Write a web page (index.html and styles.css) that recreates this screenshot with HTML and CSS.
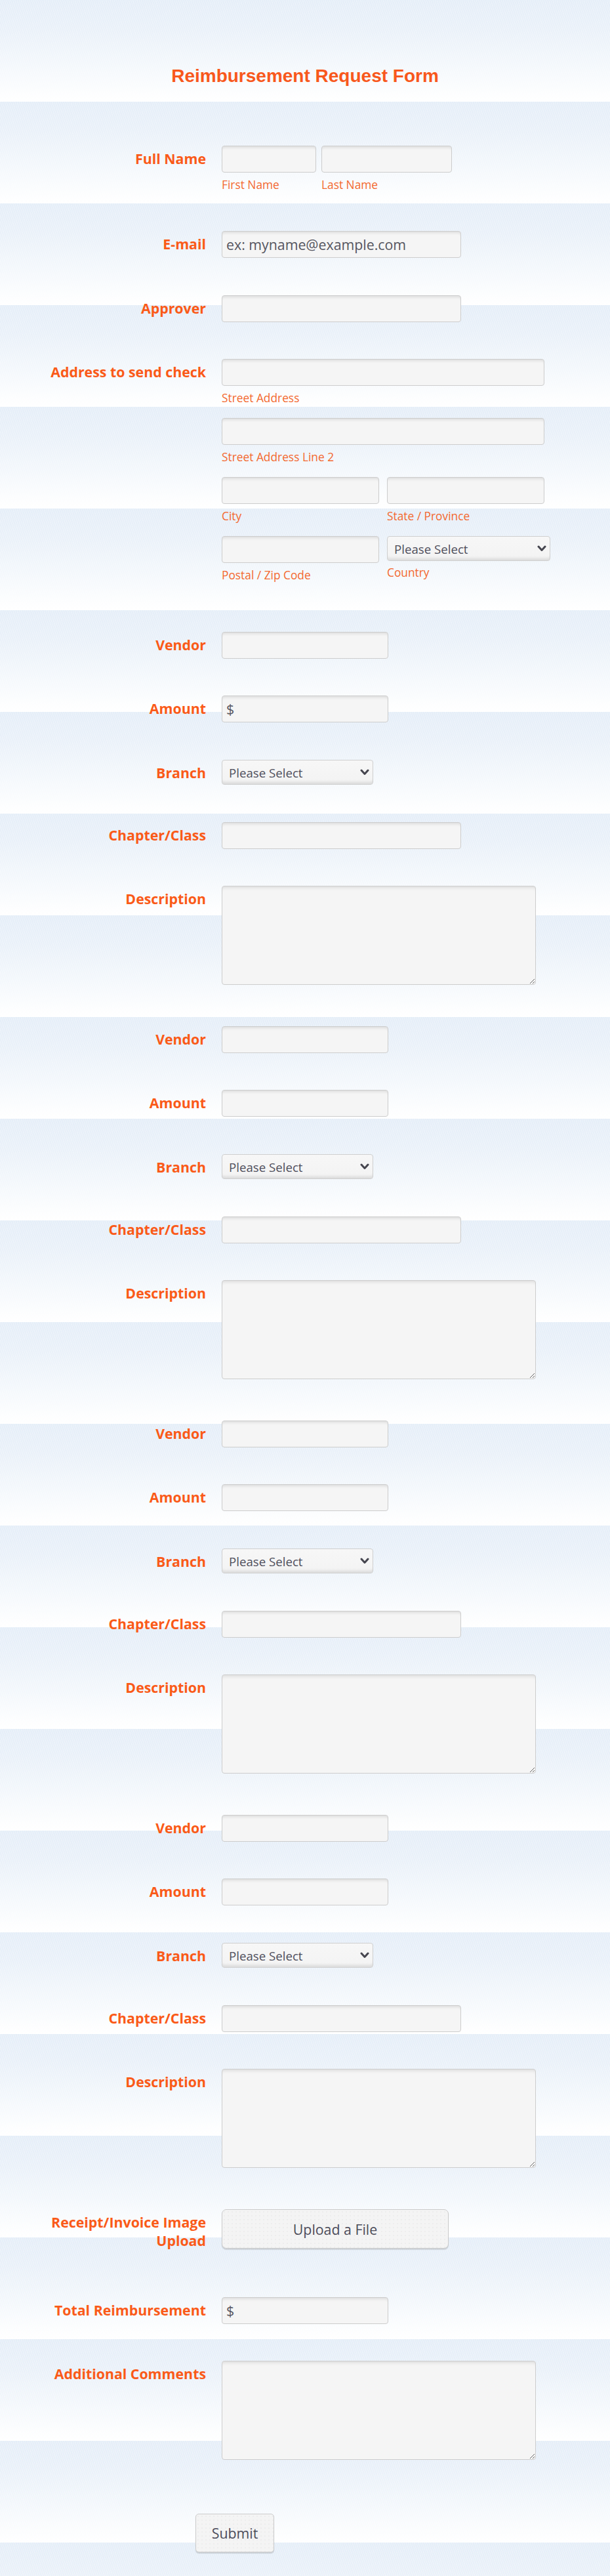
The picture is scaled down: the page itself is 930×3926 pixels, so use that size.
FILE: index.html
```html
<!DOCTYPE html>
<html lang="en">
<head>
<meta charset="utf-8">
<title>Reimbursement Request Form</title>
<link rel="stylesheet" href="styles.css">
</head>
<body>
<div class="page">
  <h1 class="title">Reimbursement Request Form</h1>

  <div class="row gap-57">
    <label class="label">Full Name</label>
    <div class="field name-field">
      <div class="part">
        <input class="input w-first" type="text">
        <span class="sublabel">First Name</span>
      </div>
      <div class="part">
        <input class="input w-last" type="text">
        <span class="sublabel">Last Name</span>
      </div>
    </div>
  </div>

  <div class="row gap-57">
    <label class="label">E-mail</label>
    <div class="field"><input class="input w-mid" type="email" placeholder="ex: myname@example.com"></div>
  </div>

  <div class="row gap-56">
    <label class="label">Approver</label>
    <div class="field"><input class="input w-mid" type="text"></div>
  </div>

  <div class="row gap-56">
    <label class="label">Address to send check</label>
    <div class="field addr">
      <div class="addr-line span2">
        <input class="input w-full" type="text">
        <span class="sublabel">Street Address</span>
      </div>
      <div class="addr-line span2">
        <input class="input w-full" type="text">
        <span class="sublabel">Street Address Line 2</span>
      </div>
      <div class="addr-line">
        <input class="input w-half" type="text">
        <span class="sublabel">City</span>
      </div>
      <div class="addr-line">
        <input class="input w-half" type="text">
        <span class="sublabel">State / Province</span>
      </div>
      <div class="addr-line">
        <input class="input w-half" type="text">
        <span class="sublabel">Postal / Zip Code</span>
      </div>
      <div class="addr-line">
        <div class="select-wrap w-country">
          <select class="select"><option>Please Select</option></select>
          <svg class="chev" width="14" height="10" viewBox="0 0 14 10"><path d="M2 2 L7 7.5 L12 2" fill="none" stroke="#46464f" stroke-width="3" stroke-linecap="round" stroke-linejoin="round"/></svg>
        </div>
        <span class="sublabel sub-select">Country</span>
      </div>
    </div>
  </div>

  <div class="row gap-56"><label class="label">Vendor</label><div class="field"><input class="input w-short" type="text"></div></div>
  <div class="row gap-57"><label class="label">Amount</label><div class="field"><input class="input w-short" type="text" placeholder="$"></div></div>
  <div class="row gap-57"><label class="label">Branch</label><div class="field"><div class="select-wrap w-branch"><select class="select"><option>Please Select</option></select><svg class="chev" width="14" height="10" viewBox="0 0 14 10"><path d="M2 2 L7 7.5 L12 2" fill="none" stroke="#46464f" stroke-width="3" stroke-linecap="round" stroke-linejoin="round"/></svg></div></div></div>
  <div class="row gap-56"><label class="label">Chapter/Class</label><div class="field"><input class="input w-mid" type="text"></div></div>
  <div class="row gap-63"><label class="label">Description</label><div class="field"><textarea class="textarea"></textarea></div></div>

  <div class="row gap-56"><label class="label">Vendor</label><div class="field"><input class="input w-short" type="text"></div></div>
  <div class="row gap-57"><label class="label">Amount</label><div class="field"><input class="input w-short" type="text"></div></div>
  <div class="row gap-57"><label class="label">Branch</label><div class="field"><div class="select-wrap w-branch"><select class="select"><option>Please Select</option></select><svg class="chev" width="14" height="10" viewBox="0 0 14 10"><path d="M2 2 L7 7.5 L12 2" fill="none" stroke="#46464f" stroke-width="3" stroke-linecap="round" stroke-linejoin="round"/></svg></div></div></div>
  <div class="row gap-56"><label class="label">Chapter/Class</label><div class="field"><input class="input w-mid" type="text"></div></div>
  <div class="row gap-63"><label class="label">Description</label><div class="field"><textarea class="textarea"></textarea></div></div>

  <div class="row gap-56"><label class="label">Vendor</label><div class="field"><input class="input w-short" type="text"></div></div>
  <div class="row gap-57"><label class="label">Amount</label><div class="field"><input class="input w-short" type="text"></div></div>
  <div class="row gap-57"><label class="label">Branch</label><div class="field"><div class="select-wrap w-branch"><select class="select"><option>Please Select</option></select><svg class="chev" width="14" height="10" viewBox="0 0 14 10"><path d="M2 2 L7 7.5 L12 2" fill="none" stroke="#46464f" stroke-width="3" stroke-linecap="round" stroke-linejoin="round"/></svg></div></div></div>
  <div class="row gap-56"><label class="label">Chapter/Class</label><div class="field"><input class="input w-mid" type="text"></div></div>
  <div class="row gap-63"><label class="label">Description</label><div class="field"><textarea class="textarea"></textarea></div></div>

  <div class="row gap-56"><label class="label">Vendor</label><div class="field"><input class="input w-short" type="text"></div></div>
  <div class="row gap-57"><label class="label">Amount</label><div class="field"><input class="input w-short" type="text"></div></div>
  <div class="row gap-57"><label class="label">Branch</label><div class="field"><div class="select-wrap w-branch"><select class="select"><option>Please Select</option></select><svg class="chev" width="14" height="10" viewBox="0 0 14 10"><path d="M2 2 L7 7.5 L12 2" fill="none" stroke="#46464f" stroke-width="3" stroke-linecap="round" stroke-linejoin="round"/></svg></div></div></div>
  <div class="row gap-56"><label class="label">Chapter/Class</label><div class="field"><input class="input w-mid" type="text"></div></div>
  <div class="row gap-63"><label class="label">Description</label><div class="field"><textarea class="textarea"></textarea></div></div>

  <div class="row gap-72">
    <label class="label">Receipt/Invoice Image Upload</label>
    <div class="field"><button class="btn upload" type="button">Upload a File</button></div>
  </div>

  <div class="row gap-56"><label class="label">Total Reimbursement</label><div class="field"><input class="input w-short" type="text" placeholder="$"></div></div>
  <div class="row gap-82"><label class="label">Additional Comments</label><div class="field"><textarea class="textarea"></textarea></div></div>

  <div class="submit-row">
    <button class="btn submit" type="submit">Submit</button>
  </div>
</div>
</body>
</html>
```

FILE: styles.css
```css
* { box-sizing: border-box; }

html, body {
  margin: 0;
  padding: 0;
}

body {
  font-family: "Open Sans", "DejaVu Sans", sans-serif;
  background-color: #ffffff;
  background-image:
    repeating-linear-gradient(72deg, rgba(255,255,255,0.28) 0px, rgba(255,255,255,0.28) 1px, rgba(255,255,255,0) 1px, rgba(255,255,255,0) 3px),
    linear-gradient(to bottom, #e5eef8 0%, #eaf1f9 30%, #f4f8fc 65%, #ffffff 100%);
  background-size: 930px 155px, 930px 155px;
  background-repeat: repeat, repeat;
}

.page {
  width: 930px;
  min-height: 3926px;
  padding-top: 99px;
  padding-bottom: 38px;
}

.title {
  margin: 0 0 89px 0;
  font-family: "Liberation Sans", Arial, sans-serif;
  font-weight: bold;
  font-size: 28px;
  line-height: 34px;
  color: #f8581c;
  text-align: center;
}

.row {
  display: flex;
  align-items: flex-start;
  margin-left: 64px;
}

.gap-56 { margin-bottom: 56px; }
.gap-57 { margin-bottom: 57px; }
.gap-63 { margin-bottom: 63px; }
.gap-72 { margin-bottom: 72px; }
.gap-82 { margin-bottom: 82px; }

.label {
  width: 250px;
  margin-right: 24px;
  padding-top: 6px;
  text-align: right;
  font-family: "Open Sans", sans-serif;
  font-weight: 700;
  font-size: 21.33px;
  line-height: 28px;
  color: #fa5a18;
  flex-shrink: 0;
}

.field {
  display: flex;
  flex-direction: column;
  align-items: flex-start;
}

.name-field {
  flex-direction: row;
  gap: 8px;
}

.part {
  display: flex;
  flex-direction: column;
}

.sublabel {
  display: block;
  margin-top: 6px;
  padding-bottom: 2px;
  font-size: 17.33px;
  line-height: 24px;
  color: #f3692f;
  white-space: nowrap;
}

.input {
  display: block;
  height: 41px;
  padding: 0 6px;
  border: 1px solid #cdcdcd;
  border-radius: 4px;
  background: #f5f5f5;
  box-shadow: inset 0 5px 4px -3px rgba(0,0,0,0.10);
  font-family: "Open Sans", sans-serif;
  font-size: 21.33px;
  color: #4f4f5c;
  outline: none;
}

.input::placeholder {
  color: #55555f;
  opacity: 1;
}

.w-first { width: 144px; }
.w-last { width: 199px; }
.w-mid { width: 365px; }
.w-full { width: 492px; }
.w-half { width: 240px; }
.w-short { width: 254px; }
.w-branch { width: 231px; }
.w-country { width: 249px; }

.addr {
  display: grid;
  grid-template-columns: 240px 240px;
  column-gap: 12px;
  width: 492px;
  align-items: start;
}

.addr-line {
  display: flex;
  flex-direction: column;
  align-items: flex-start;
  margin-bottom: 17px;
}

.span2 { grid-column: 1 / span 2; }

.select-wrap {
  position: relative;
  height: 38px;
  flex-shrink: 0;
}

.select {
  display: block;
  width: 100%;
  height: 38px;
  padding: 0 28px 0 10px;
  border: 1px solid #cfcfcf;
  border-radius: 4px;
  background: linear-gradient(to bottom, #f7f7f7, #f3f3f3);
  box-shadow: inset 0 -6px 4px -3px rgba(0,0,0,0.10);
  font-family: "Open Sans", sans-serif;
  font-size: 18.67px;
  color: #4f4f5c;
  -webkit-appearance: none;
  appearance: none;
  outline: none;
}

.chev {
  position: absolute;
  right: 6px;
  top: 14px;
  pointer-events: none;
}

.sub-select {
  margin-top: 5px;
}

.textarea {
  display: block;
  width: 479px;
  height: 151px;
  border: 1px solid #cdcdcd;
  border-radius: 4px;
  background: #f5f5f5;
  box-shadow: inset 0 6px 5px -4px rgba(0,0,0,0.10);
  font-family: "Open Sans", sans-serif;
  font-size: 21.33px;
  padding: 6px;
  margin: 0;
}

.btn {
  display: block;
  border: 1px solid #cbcbcb;
  border-radius: 7px;
  background-color: #f4f4f4;
  background-image: radial-gradient(rgba(0,0,0,0.06) 0.6px, transparent 0.8px);
  background-size: 6px 6px;
  box-shadow: 0 2px 1px rgba(0,0,0,0.12);
  font-family: "Open Sans", sans-serif;
  font-size: 21.33px;
  color: #4c4c5a;
  cursor: pointer;
}

.upload {
  width: 346px;
  height: 60px;
}

.submit-row {
  display: flex;
  padding-left: 298px;
}

.submit {
  width: 120px;
  height: 59px;
  border-radius: 5px;
}
```
